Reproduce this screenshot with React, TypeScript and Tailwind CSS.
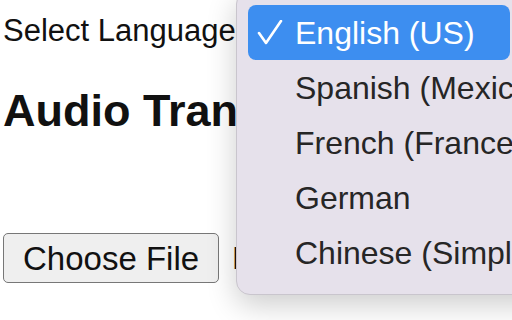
import React from 'react';

const languages = ['English (US)', 'Spanish (Mexico)', 'French (France)', 'German', 'Chinese (Simplified)'];

function Check() {
  return (
    <svg width="26" height="26" viewBox="0 0 26 26" fill="none" className="shrink-0">
      <polyline points="2,13 9,23 24,1" stroke="white" strokeWidth="2.6" strokeLinecap="round" strokeLinejoin="round" />
    </svg>
  );
}

export default function App() {
  return (
    <div className="relative w-[512px] h-[320px] overflow-hidden bg-white text-[#111] font-['Liberation_Sans',Arial,sans-serif]">
      <div className="pl-[3px] pt-[13px]">
        <div className="flex items-center gap-3 h-[36px]">
          <label className="text-[31px] leading-[36px] whitespace-nowrap">Select Language</label>
          <select className="h-[36px] w-[260px] text-[30px]">
            <option>English (US)</option>
          </select>
        </div>

        <h2 className="mt-[37px] text-[45px] leading-[50px] font-bold whitespace-nowrap">Audio Transcription</h2>

        <div className="mt-[97px] flex items-center gap-[13px]">
          <button className="h-[50px] px-[19px] shrink-0 flex items-center text-[33px] leading-none bg-[#efefef] border-[1.5px] border-[#777] rounded-[5px] text-[#111] whitespace-nowrap">
            Choose File
          </button>
          <span className="text-[32px] leading-none whitespace-nowrap">No file chosen</span>
        </div>
      </div>

      {/* open select menu */}
      <div className="absolute left-[236px] top-[-10px] w-[320px] h-[305px] bg-[#e6e1eb] border border-[#c9c5cd] rounded-[14px] shadow-[0_10px_30px_rgba(0,0,0,0.2)] pt-[14px] pl-[11px] overflow-hidden">
        {languages.map((lang, i) => (
          <div
            key={lang}
            className={`flex items-center h-[55px] w-[262px] rounded-[8px] pl-[9px] ${i === 0 ? 'bg-[#3d8ef0] text-white' : 'text-[#262626]'}`}
          >
            <div className="w-[38px] shrink-0 flex">{i === 0 && <Check />}</div>
            <span className="text-[32px] leading-none whitespace-nowrap">{lang}</span>
          </div>
        ))}
      </div>
    </div>
  );
}
